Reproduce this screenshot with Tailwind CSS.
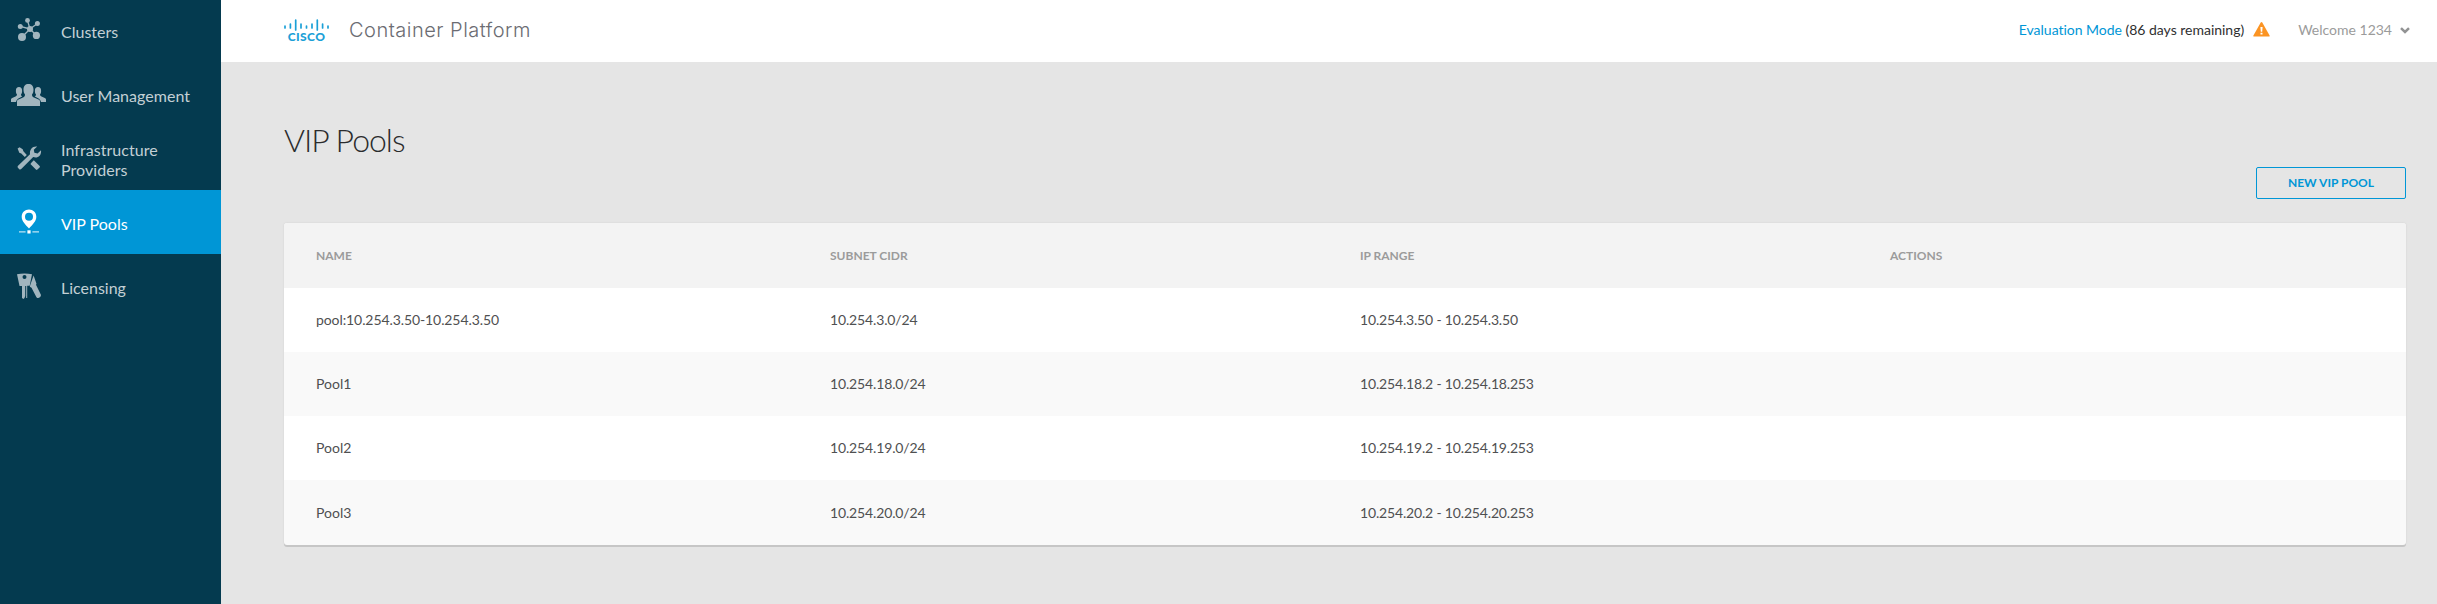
<!DOCTYPE html>
<html lang="en">
<head>
<meta charset="utf-8">
<title>VIP Pools</title>
<script src="https://cdn.jsdelivr.net/npm/@tailwindcss/browser@4"></script>
</head>
<body class="flex h-[604px] w-[2437px] overflow-hidden bg-[#e5e5e5] font-['Lato',sans-serif] text-sm text-[#4f5051]">
<nav class="flex w-[221px] shrink-0 flex-col bg-[#043a4f] text-base leading-5 text-[#c3d0d5]">
  <a class="flex h-[62px] items-center pt-0.5">
    <svg class="-mt-0.5 h-[62px] w-[61px]" viewBox="0 0 61 62" fill="#a1b5be" stroke="#a1b5be" stroke-width="1.3">
      <path d="M30 29 27.5 20.5M30 29 37.4 23.4M30 29 20.3 26.4M30 29 22 37M30 29 36.3 35.3"/>
      <g stroke="none"><circle cx="30" cy="29" r="3"/><circle cx="27.5" cy="20.4" r="2.4"/><circle cx="37.4" cy="23.4" r="2.5"/><circle cx="20.3" cy="26.4" r="2.5"/><circle cx="22" cy="37" r="4"/><circle cx="36.4" cy="35.4" r="3.6"/></g>
    </svg>
    <span>Clusters</span>
  </a>
  <a class="flex h-16 items-center">
    <svg class="h-16 w-[61px]" viewBox="0 62 61 64" fill="#a1b5be">
      <path d="M17 106v-4.500c0-1 .6-1.600 1.500-2l4.500-2c1.600-.7 2-1.500 2-3-1-1-1.500-3-1.500-5 0-3.500 1.800-5.500 5-5.500s5 2 5 5.500c0 2-.5 4-1.500 5 0 1.500.4 2.300 2 3l4.500 2c.9.400 1.500 1 1.500 2v4.500z"/>
      <path d="M11 102v-2.500c0-.8.5-1.200 1.200-1.600l3.300-1.500c1.200-.6 1.500-1.100 1.500-2-.8-.8-1.100-2.100-1.100-3.700 0-2.400 1.100-3.700 3.100-3.700s3.100 1.300 3.100 3.700c0 1.600-.3 2.900-1.100 3.700 0 .8.200 1.500 1.200 2-3.500 1.600-5.700 2.600-6.200 5.600z"/>
      <path d="M46 102v-2.500c0-.8-.5-1.200-1.200-1.600l-3.300-1.500c-1.200-.6-1.500-1.100-1.500-2 .8-.8 1.100-2.100 1.100-3.700 0-2.400-1.100-3.700-3.100-3.700s-3.100 1.300-3.100 3.700c0 1.600.3 2.900 1.100 3.700 0 .8-.2 1.500-1.200 2 3.500 1.600 5.700 2.600 6.200 5.600z"/>
    </svg>
    <span class="pt-1 tracking-[0.03px]">User Management</span>
  </a>
  <a class="flex h-16 items-center">
    <svg class="h-16 w-[61px] shrink-0" viewBox="0 126 61 64" fill="#a1b5be">
      <path d="M17.600 148.400l2-1.100 3.100 2 .7 2 3.400 3.600-2 2-3.500-3.500-2-.6z"/>
      <path d="M31.800 162.300l2-2 5.600 5.500c.7.700.7 1.100.2 1.600l-2.200 2.200c-.5.400-1 .4-1.500-.2l-5.500-5.500z"/>
      <path d="M37.200 146.500l-3.400 3.200.6 3.100 3.200.7 3.400-3.200c.5 3.300-1.100 6.700-4.300 7.100-1.300.2-2.500 0-3.500-.4L21.500 168.800c-.9.900-1.700.9-2.500.1l-.8-.8c-.8-.8-.8-1.700.1-2.500l11.700-11.400c-.7-4.800 2.600-8.400 7.200-7.700z"/>
    </svg>
    <span class="pt-[3px] tracking-[0.05px]">Infrastructure<br>Providers</span>
  </a>
  <a class="flex h-16 items-center bg-[#0096d6] text-white">
    <svg class="h-16 w-[61px]" viewBox="0 190 61 64" fill="#fff">
      <path fill-rule="evenodd" d="M29 209.500c4.100 0 7.300 3.100 7.300 7.200 0 4.600-3.800 7.800-7.300 11.800-3.500-4-7.300-7.200-7.300-11.800 0-4.100 3.200-7.200 7.300-7.200zm0 3.200a4 4 0 1 0 0 8 4 4 0 0 0 0-8z"/>
      <path d="M27.400 230.300h3.200v3.200h-3.200z"/><path fill-opacity=".75" d="M19 231.300h6.600v1.300H19zM32.400 231.300H39v1.300h-6.600z"/>
    </svg>
    <span class="pt-1">VIP Pools</span>
  </a>
  <a class="flex h-16 items-center">
    <svg class="h-16 w-[61px]" viewBox="0 254 61 64" fill="#a1b5be">
      <path fill-rule="evenodd" d="M17 274.300c4.500-1.200 10.500-1.200 15 0l-2.300 11.500h-2.500V298h-1V286h-1v10l-.7 2-1 1-1.500-1V286h-2.500zm7.500.7a2 2 0 1 0 0 4 2 2 0 0 0 0-4z"/>
      <path d="M33.600 275.500l2.900 8.200-.5 1 4.900 10c.3 1.400-.8 2.800-2.600 3.300-1 .3-1.600-.3-2.100-1.300l-4.700-9-1.700-1 .6-2.200z"/>
    </svg>
    <span class="pt-1">Licensing</span>
  </a>
</nav>
<div class="flex min-w-0 flex-1 flex-col">
  <header class="flex h-[62px] shrink-0 items-center bg-white pr-[27px] pb-0.5 pl-[63px]">
    <div class="flex w-[45px] flex-col items-center">
      <svg class="h-3 w-[45px]" viewBox="0 0 45 12" stroke="#1ba0d7" stroke-width="1.7" stroke-linecap="round">
        <path d="M1 7v2M6.400 5v4M11.700 1v10M17 5v4M22.500 7v2M28 5v4M33.300 1v10M38.600 5v4M44 7v2"/>
      </svg>
      <span class="h-[10px] text-[12px] leading-[11px] font-black tracking-[0.4px] text-[#1ba0d7]">CISCO</span>
    </div>
    <span class="ml-5 font-['Inter'] text-[20px] font-light tracking-[0.5px] text-[#6b6c72]">Container Platform</span>
    <div class="ml-auto flex items-center">
      <span class="tracking-[-0.02px] text-[#2f3031]"><span class="text-[#0096d6]">Evaluation Mode</span> (86 days remaining)</span>
      <svg class="-mt-0.5 ml-[9px] h-[15px] w-[17px]" viewBox="0 0 17 15"><path fill="#fb9423" d="M7.700.5q.8-1 1.600 0L16.600 13.500q.3 1-.7 1H1.100q-1 0-.7-1z"/><path fill="#fff" d="M7.400 5h2.200l-.4 4.700H7.800zM7.500 10.700h2v1.800h-2z"/></svg>
      <span class="ml-7 text-[#9b9b9b]">Welcome 1234</span>
      <svg class="ml-2 h-[7px] w-[10px]" viewBox="0 0 10 7" fill="none" stroke="#929394" stroke-width="2.500"><path d="M1 1.200 5 5l4-3.800"/></svg>
    </div>
  </header>
  <main class="flex flex-col pt-[56px] pr-[31px] pl-[63px]">
    <h1 class="h-[49px] text-[32px] leading-[44px] font-light tracking-[-1px] text-[#2b2c2d]">VIP Pools</h1>
    <button class="h-8 w-[150px] self-end rounded-[2px] border border-[#0096d6] text-[12px] font-bold text-[#0096d6]">NEW VIP POOL</button>
    <table class="mt-6 w-[2122px] table-fixed overflow-hidden rounded-[3px] bg-[#f9f9f9] text-left shadow-[0_2px_0_#c6c6c6,0_0_2px_#cccccc]">
      <colgroup><col class="w-[514px]"><col class="w-[530px]"><col class="w-[530px]"><col></colgroup>
      <thead class="h-[65px] bg-[#f3f3f3] text-[12px] text-[#9b9b9b]">
        <tr><th class="pl-8">NAME</th><th class="pl-8">SUBNET CIDR</th><th class="pl-8">IP RANGE</th><th class="pl-8">ACTIONS</th></tr>
      </thead>
      <tbody class="tracking-[-0.14px]">
        <tr class="h-16 bg-white"><td class="pl-8 tracking-[-0.09px]">pool:10.254.3.50-10.254.3.50</td><td class="pl-8">10.254.3.0/24</td><td class="pl-8 tracking-[-0.17px]">10.254.3.50 - 10.254.3.50</td><td></td></tr>
        <tr class="h-16"><td class="pl-8 tracking-normal">Pool1</td><td class="pl-8">10.254.18.0/24</td><td class="pl-8 tracking-[-0.17px]">10.254.18.2 - 10.254.18.253</td><td></td></tr>
        <tr class="h-16 bg-white"><td class="pl-8 tracking-normal">Pool2</td><td class="pl-8">10.254.19.0/24</td><td class="pl-8 tracking-[-0.17px]">10.254.19.2 - 10.254.19.253</td><td></td></tr>
        <tr class="h-[65px]"><td class="pl-8 tracking-normal">Pool3</td><td class="pl-8">10.254.20.0/24</td><td class="pl-8 tracking-[-0.17px]">10.254.20.2 - 10.254.20.253</td><td></td></tr>
      </tbody>
    </table>
  </main>
</div>
</body>
</html>
